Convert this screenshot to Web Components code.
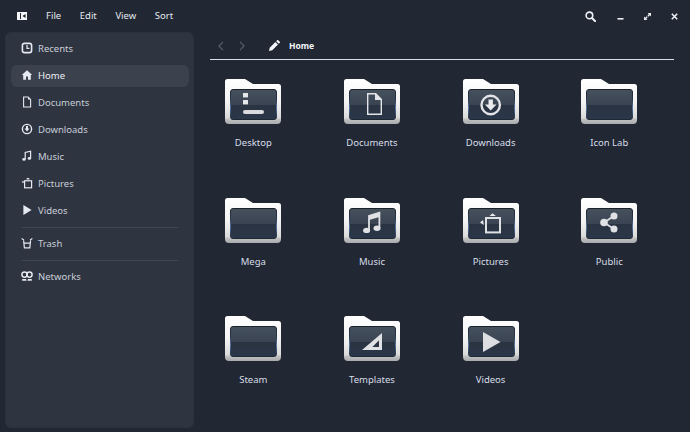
<!DOCTYPE html>
<html>
<head>
<meta charset="utf-8">
<title>Home</title>
<style>
  html, body { margin: 0; height: 100%; background: #212733; overflow: hidden; }
  body { font-family: "Noto Sans", sans-serif; font-size: 9.5px; color: #d8dee9; }
</style>
</head>
<body>
<files-window>
  <top-bar slot="top"></top-bar>
  <places-sidebar slot="side">
    <place-row icon="recent">Recents</place-row>
    <place-row icon="home" selected>Home</place-row>
    <place-row icon="doc">Documents</place-row>
    <place-row icon="down">Downloads</place-row>
    <place-row icon="music">Music</place-row>
    <place-row icon="pics">Pictures</place-row>
    <place-row icon="video">Videos</place-row>
    <place-sep></place-sep>
    <place-row icon="trash">Trash</place-row>
    <place-sep></place-sep>
    <place-row icon="net">Networks</place-row>
  </places-sidebar>
  <path-bar slot="main"></path-bar>
  <folder-grid slot="main">
    <folder-item kind="desktop">Desktop</folder-item>
    <folder-item kind="doc">Documents</folder-item>
    <folder-item kind="down">Downloads</folder-item>
    <folder-item>Icon Lab</folder-item>
    <folder-item>Mega</folder-item>
    <folder-item kind="music">Music</folder-item>
    <folder-item kind="pics">Pictures</folder-item>
    <folder-item kind="share">Public</folder-item>
    <folder-item>Steam</folder-item>
    <folder-item kind="tmpl">Templates</folder-item>
    <folder-item kind="video">Videos</folder-item>
  </folder-grid>
</files-window>

<script>
class FilesWindow extends HTMLElement {
  constructor() {
    super();
    this.attachShadow({ mode: 'open' });
    this.shadowRoot.innerHTML = `
      <style>
        :host { display: grid; grid-template-columns: 194px 1fr; grid-template-rows: 32px 400px; width: 690px; height: 432px; }
        .top { grid-column: 1 / 3; }
        .main { display: flex; flex-direction: column; min-width: 0; }
      </style>
      <div class="top"><slot name="top"></slot></div>
      <slot name="side"></slot>
      <div class="main"><slot name="main"></slot></div>
    `;
  }
}

class TopBar extends HTMLElement {
  constructor() {
    super();
    this.attachShadow({ mode: 'open' });
    this.shadowRoot.innerHTML = `
      <style>
        :host { display: flex; align-items: center; height: 32px; padding-left: 17px; color: #e5e9f0; }
        svg { display: block; }
        .menu { display: flex; margin-left: 19px; }
        .menu span { margin-right: 18.6px; line-height: 32px; }
        .tools { margin-left: auto; display: flex; align-items: center; padding-right: 12px; }
      </style>
      <svg width="10" height="8" viewBox="0 0 10 8"><path fill="#f4f6fa" fill-rule="evenodd" d="M0 0h10v8H0zM3 1v6h1V1zM8.6 2 5.4 4l3.2 2z"/></svg>
      <div class="menu"><span>File</span><span>Edit</span><span>View</span><span>Sort</span></div>
      <div class="tools">
        <svg width="11" height="11" viewBox="0 0 11 11" style="margin-right:21px"><circle cx="4.4" cy="4.4" r="3.3" fill="none" stroke="#eceff4" stroke-width="1.6"/><path d="M7 7l3.2 3.2" stroke="#eceff4" stroke-width="2" stroke-linecap="round"/></svg>
        <svg width="7" height="7" viewBox="0 0 7 7" style="margin-right:20px"><rect x="0.5" y="5" width="6" height="1.6" fill="#eceff4"/></svg>
        <svg width="7" height="7" viewBox="0 0 7 7" style="margin-right:20px"><path fill="#eceff4" d="M3.6 0H7v3.4L5.8 2.2 4.3 3.7 3.3 2.7 4.8 1.2zM3.4 7H0V3.6l1.2 1.2 1.5-1.5 1 1-1.5 1.5z"/></svg>
        <svg width="7" height="7" viewBox="0 0 7 7"><path d="M.8.8l5.4 5.4M6.2.8L.8 6.2" stroke="#eceff4" stroke-width="1.6"/></svg>
      </div>
    `;
  }
}

class PlacesSidebar extends HTMLElement {
  constructor() {
    super();
    this.attachShadow({ mode: 'open' });
    this.shadowRoot.innerHTML = `
      <style>
        :host { display: block; margin: 0 0 4px 5px; padding: 5px 4px 0 5px; background: #2e3440; border: 1px solid #2b313d; border-radius: 6px; box-sizing: border-box; }
      </style>
      <slot></slot>
    `;
  }
}

const PLACE_ICONS = {
  recent: '<rect x="1.4" y="1.4" width="9.2" height="9.2" rx="2.2" fill="none" stroke="currentColor" stroke-width="1.6"/><path d="M6 3v3.3h2.4" fill="none" stroke="currentColor" stroke-width="1.2"/>',
  home: '<path fill="currentColor" d="M6 1.2 11.2 6H9.8v4.8H7V7.6H5v3.2H2.2V6H.8z"/>',
  doc: '<path fill="none" stroke="currentColor" stroke-width="1.1" d="M2.6 1H7.2L9.6 3.4V11H2.6z"/><path fill="currentColor" d="M7 1 9.6 3.6H7z"/>',
  down: '<circle cx="6" cy="6" r="4.6" fill="none" stroke="currentColor" stroke-width="1.4"/><path fill="currentColor" d="M5 3h2v2.6h1.5L6 8.6 3.5 5.6H5z"/>',
  music: '<path fill="none" stroke="currentColor" stroke-width="1.2" d="M4.2 9V2.4L9.6 1.2V8"/><ellipse cx="3" cy="9.4" rx="1.7" ry="1.3" fill="currentColor"/><ellipse cx="8.4" cy="8.4" rx="1.7" ry="1.3" fill="currentColor"/>',
  pics: '<rect x="3.6" y="3.8" width="7" height="7" fill="none" stroke="currentColor" stroke-width="1.2"/><path fill="currentColor" d="M.6 5 2.6 3.6v2.6zM5.6 1.6 7 .8l1.4.8.2 1H5.4z"/>',
  video: '<path fill="currentColor" d="M2.4 1 10.6 6 2.4 11z"/>',
  trash: '<path fill="none" stroke="currentColor" stroke-width="1.2" d="M2.6 3.4 3.4 10.8H8.8L9.6 3.4M3.2 6.2H9"/><path stroke="currentColor" stroke-width="1.2" d="M.6 1.6 3 3M11.4 1.6 9 3"/>',
  net: '<circle cx="3.5" cy="4.6" r="2.6" fill="none" stroke="currentColor" stroke-width="1.5"/><circle cx="8.5" cy="4.6" r="2.6" fill="none" stroke="currentColor" stroke-width="1.5"/><path fill="currentColor" d="M1.2 9h3.8l.6 1.8H1.2zM7 9h3.8v1.8H6.4z"/>'
};

class PlaceRow extends HTMLElement {
  constructor() {
    super();
    this.attachShadow({ mode: 'open' });
    this.shadowRoot.innerHTML = `
      <style>
        :host { display: flex; align-items: center; gap: 5px; box-sizing: border-box; height: 22px; margin-bottom: 5px; padding: 0 0 2px 10px; border-radius: 6px; color: #c9ced8; }
        :host([selected]) { background: #3b414d; color: #eceff4; }
        svg { width: 12px; height: 12px; flex: none; color: #e5e9f0; }
      </style>
      <svg viewBox="0 0 12 12">${PLACE_ICONS[this.getAttribute('icon')] || ''}</svg>
      <slot></slot>
    `;
  }
}

class PlaceSep extends HTMLElement {
  constructor() {
    super();
    this.attachShadow({ mode: 'open' });
    this.shadowRoot.innerHTML = `
      <style>
        :host { display: block; height: 1px; margin: 0 11px 5px; background: #414753; }
      </style>
    `;
  }
}

class PathBar extends HTMLElement {
  constructor() {
    super();
    this.attachShadow({ mode: 'open' });
    this.shadowRoot.innerHTML = `
      <style>
        :host { display: flex; flex: none; align-items: center; height: 27px; margin: 0 16px 0 16px; border-bottom: 1px solid #d8dee9; }
        svg { display: block; flex: none; }
        b { font-size: 8.5px; color: #f4f6fa; margin-left: 9px; }
      </style>
      <svg width="6" height="10" viewBox="0 0 6 10" style="margin-left:8px"><path d="M5 .8.9 5 5 9.2" fill="none" stroke="#596170" stroke-width="1.1"/></svg>
      <svg width="6" height="10" viewBox="0 0 6 10" style="margin-left:15px"><path d="M1 .8 5.1 5 1 9.2" fill="none" stroke="#596170" stroke-width="1.1"/></svg>
      <svg width="11" height="11" viewBox="0 0 11 11" style="margin-left:24px"><path fill="#f4f6fa" d="M0 11 .7 7.7 6.4 2 9 4.6 3.3 10.3zM7.2 1.2 8.2.2a.7.7 0 0 1 1 0l1.6 1.6a.7.7 0 0 1 0 1L9.8 3.8z"/></svg>
      <b>Home</b>
    `;
  }
}

class FolderGrid extends HTMLElement {
  constructor() {
    super();
    this.attachShadow({ mode: 'open' });
    this.shadowRoot.innerHTML = `
      <style>
        :host { display: grid; flex: none; grid-template-columns: repeat(4, 118.65px); grid-auto-rows: 118.5px; padding-top: 19px; }
      </style>
      <slot></slot>
    `;
  }
}

const EMBLEMS = {
  desktop: '<rect x="18" y="14" width="5" height="4.4" fill="#e6e8ec"/><rect x="18" y="21" width="5" height="4.4" fill="#e6e8ec"/><rect x="18" y="31" width="21" height="4" rx="2" fill="#d8dade"/>',
  doc: '<path fill="#e2e4e8" fill-rule="evenodd" d="M23 14h9l6 6v16H23zM24.4 15.4V34.6H36.6V21H31V15.4z"/>',
  down: '<circle cx="27.7" cy="26" r="9.2" fill="none" stroke="#e2e4e8" stroke-width="2.4"/><path fill="#e8eaee" d="M25.5 20.5h4.4v5h3.6L27.7 31.5l-5.8-6h3.6z"/>',
  music: '<path fill="none" stroke="#dfe1e5" stroke-width="1.8" d="M25 32V18L35.4 14.8V30"/><path fill="#dfe1e5" d="M25 18 35.4 14.8v4.2L25 22z"/><ellipse cx="22.6" cy="32.4" rx="3.5" ry="2.7" fill="#dfe1e5"/><ellipse cx="33" cy="30.2" rx="3.5" ry="2.7" fill="#dfe1e5"/>',
  pics: '<rect x="23" y="20" width="14" height="14.4" fill="none" stroke="#dfe1e5" stroke-width="2"/><path fill="#e8eaee" d="M17 24.5l3-2.6.8 5zM26.5 18l3-2.8 3.4 2.8z"/>',
  share: '<path stroke="#dfe1e5" stroke-width="1.8" d="M23 24.5 33 18M23 24.5 33 31"/><circle cx="23" cy="24.5" r="3.8" fill="#dfe1e5"/><circle cx="33" cy="18" r="3.5" fill="#dfe1e5"/><circle cx="33" cy="31" r="3.5" fill="#dfe1e5"/>',
  tmpl: '<path fill="#dfe1e5" fill-rule="evenodd" d="M38 17V34H18zM35 24.2 28.4 31H35z"/>',
  video: '<path fill="#dcdee2" d="M20 16 37.5 26 20 36z"/>'
};

class FolderItem extends HTMLElement {
  constructor() {
    super();
    this.attachShadow({ mode: 'open' });
    const id = 'f' + Math.random().toString(36).slice(2, 8);
    this.shadowRoot.innerHTML = `
      <style>
        :host { display: flex; flex-direction: column; align-items: center; color: #d8dee9; }
        svg { display: block; margin-bottom: 10px; }
        span { line-height: 16px; }
      </style>
      <svg width="56" height="46" viewBox="0 0 56 46">
        <defs>
          <linearGradient id="${id}b" x1="0" y1="0" x2="0" y2="1">
            <stop offset="0" stop-color="#ffffff"/><stop offset=".5" stop-color="#f4f4f4"/><stop offset=".86" stop-color="#dadada"/><stop offset=".9" stop-color="#c0c0c0"/><stop offset="1" stop-color="#a8aaae"/>
          </linearGradient>
          <linearGradient id="${id}i" x1="0" y1="0" x2="0" y2="1">
            <stop offset="0" stop-color="#46515e"/><stop offset=".5" stop-color="#3a4452"/><stop offset=".52" stop-color="#2a3341"/><stop offset="1" stop-color="#2a374a"/>
          </linearGradient>
          <linearGradient id="${id}s" x1="0" y1="0" x2="0" y2="1">
            <stop offset="0" stop-color="#1c222c"/><stop offset=".35" stop-color="#2c3a4e"/><stop offset=".6" stop-color="#5678a4"/><stop offset=".85" stop-color="#34465e"/><stop offset="1" stop-color="#1f2733"/>
          </linearGradient>
        </defs>
        <path fill="url(#${id}b)" d="M2.5 0H20L28 5H53.5A2.5 2.5 0 0 1 56 7.5V41A4 4 0 0 1 52 45H4A4 4 0 0 1 0 41V2.5A2.5 2.5 0 0 1 2.5 0Z"/>
        <rect x="5.5" y="10.5" width="46" height="30" rx="2.5" fill="url(#${id}i)" stroke="url(#${id}s)" stroke-width="1"/>
        ${EMBLEMS[this.getAttribute('kind')] || ''}
      </svg>
      <span><slot></slot></span>
    `;
  }
}

customElements.define('files-window', FilesWindow);
customElements.define('top-bar', TopBar);
customElements.define('places-sidebar', PlacesSidebar);
customElements.define('place-row', PlaceRow);
customElements.define('place-sep', PlaceSep);
customElements.define('path-bar', PathBar);
customElements.define('folder-grid', FolderGrid);
customElements.define('folder-item', FolderItem);
</script>
</body>
</html>
